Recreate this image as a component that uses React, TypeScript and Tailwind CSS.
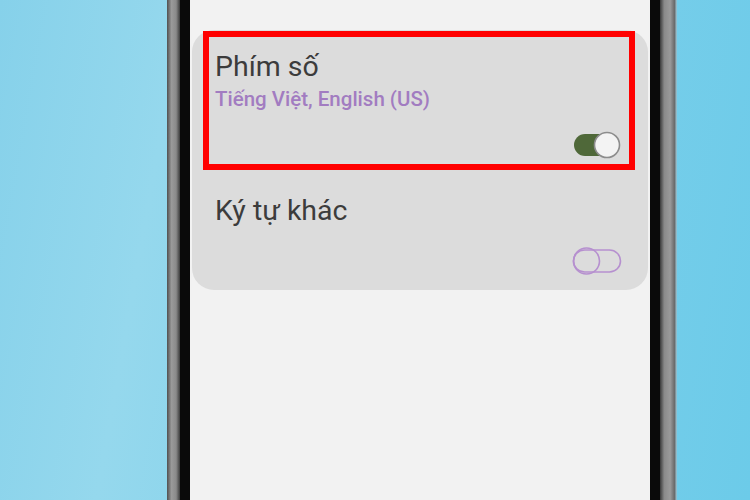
function ToggleOn() {
  return (
    <svg width="50" height="30" viewBox="0 0 50 30">
      <rect x="2" y="4" width="45" height="22" rx="11" fill="#4f6839" />
      <circle cx="35" cy="15" r="12.5" fill="#f3f3f3" stroke="#8c8c8c" strokeWidth="1.6" />
    </svg>
  );
}

function ToggleOff() {
  return (
    <svg width="50" height="30" viewBox="0 0 50 30">
      <rect x="1.5" y="4" width="47" height="22" rx="11" fill="none" stroke="#b690cf" strokeWidth="1.6" />
      <circle cx="14.5" cy="15" r="13" fill="none" stroke="#b690cf" strokeWidth="1.6" />
    </svg>
  );
}

export default function App() {
  return (
    <div
      className="flex h-[500px] w-[750px] overflow-hidden bg-[linear-gradient(100deg,#86d1ea_0%,#95d8ed_22%,#7dcfea_60%,#6ccbe9_100%)]"
      style={{ fontFamily: 'Roboto, "Noto Sans", sans-serif' }}
    >
      <div className="ml-[167px] flex h-full w-[510px]">
        {/* left bezel */}
        <div className="w-[13px] bg-[linear-gradient(to_right,#505050,#9a9a9a_35%,#8a8a8a_70%,#3a3a3a)]" />
        <div className="w-[10px] bg-[#0a0a0a]" />

        {/* screen */}
        <div className="flex-1 bg-[#f2f2f2] px-[2px] pt-[30px]">
          <div className="rounded-[22px] bg-[#dcdcdc] pl-[11px] pr-[13px] pt-[1px] pb-[14px]">
            {/* highlighted row */}
            <div className="flex h-[139px] flex-col border-[6px] border-[#ff0000] pl-[6px] pr-[7px] pt-[14px] pb-[4px]">
              <div className="text-[28.5px] leading-[32px] text-[#3c3c3c]">Phím số</div>
              <div className="mt-[4px] text-[20.5px] font-medium leading-[24px] text-[#a27cc1]">
                Tiếng Việt, English (US)
              </div>
              <div className="mt-[19px] flex justify-end">
                <ToggleOn />
              </div>
            </div>

            {/* second row */}
            <div className="mt-[25px] flex flex-col pl-[12px] pr-[13px]">
              <div className="text-[28.5px] leading-[32px] text-[#3c3c3c]">Ký tự khác</div>
              <div className="mt-[19px] flex justify-end">
                <ToggleOff />
              </div>
            </div>
          </div>
        </div>

        {/* right bezel */}
        <div className="w-[10px] bg-[#0a0a0a]" />
        <div className="w-[17px] bg-[linear-gradient(to_right,#3a3a3a,#8a8a8a_25%,#9a9a9a_60%,#6a6a6a_85%,#9ccfe0)]" />
      </div>
    </div>
  );
}
